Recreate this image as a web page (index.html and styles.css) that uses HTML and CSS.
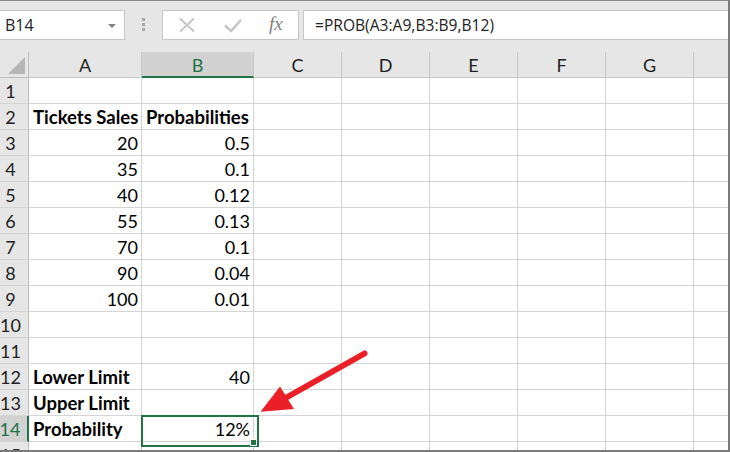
FILE: index.html
```html
<!DOCTYPE html>
<html>
<head>
<meta charset="utf-8">
<link rel="stylesheet" href="styles.css">
</head>
<body>
<div class="frame">
  <div class="fbar">
    <div class="namebox"><span class="nb-text">B14</span><span class="nb-caret"></span></div>
    <div class="grip"><i></i><i></i><i></i></div>
    <div class="fbtns">
      <svg class="ic-x" width="18" height="16" viewBox="0 0 18 16"><path d="M2 1.5 L16 14.5 M16 1.5 L2 14.5" stroke="#c6c6c6" stroke-width="2" fill="none"/></svg>
      <svg class="ic-check" width="20" height="16" viewBox="0 0 20 16"><path d="M2 7.5 L8 13 L18 2" stroke="#c6c6c6" stroke-width="2.6" fill="none"/></svg>
      <span class="fx">fx</span>
    </div>
    <div class="finput">=PROB(A3:A9,B3:B9,B12)</div>
  </div>
  <div class="sheet">
    <div class="hd corner"><span class="tri"></span></div>
    <div class="hd col">A</div>
    <div class="hd col sel">B</div>
    <div class="hd col">C</div>
    <div class="hd col">D</div>
    <div class="hd col">E</div>
    <div class="hd col">F</div>
    <div class="hd col">G</div>
    <div class="hd col last"></div>

    <div class="hd row">1</div><div class="c"></div><div class="c"></div><div class="c"></div><div class="c"></div><div class="c"></div><div class="c"></div><div class="c"></div><div class="c last"></div>
    <div class="hd row">2</div><div class="c b">Tickets Sales</div><div class="c b">Probabilities</div><div class="c"></div><div class="c"></div><div class="c"></div><div class="c"></div><div class="c"></div><div class="c last"></div>
    <div class="hd row">3</div><div class="c n">20</div><div class="c n">0.5</div><div class="c"></div><div class="c"></div><div class="c"></div><div class="c"></div><div class="c"></div><div class="c last"></div>
    <div class="hd row">4</div><div class="c n">35</div><div class="c n">0.1</div><div class="c"></div><div class="c"></div><div class="c"></div><div class="c"></div><div class="c"></div><div class="c last"></div>
    <div class="hd row">5</div><div class="c n">40</div><div class="c n">0.12</div><div class="c"></div><div class="c"></div><div class="c"></div><div class="c"></div><div class="c"></div><div class="c last"></div>
    <div class="hd row">6</div><div class="c n">55</div><div class="c n">0.13</div><div class="c"></div><div class="c"></div><div class="c"></div><div class="c"></div><div class="c"></div><div class="c last"></div>
    <div class="hd row">7</div><div class="c n">70</div><div class="c n">0.1</div><div class="c"></div><div class="c"></div><div class="c"></div><div class="c"></div><div class="c"></div><div class="c last"></div>
    <div class="hd row">8</div><div class="c n">90</div><div class="c n">0.04</div><div class="c"></div><div class="c"></div><div class="c"></div><div class="c"></div><div class="c"></div><div class="c last"></div>
    <div class="hd row">9</div><div class="c n">100</div><div class="c n">0.01</div><div class="c"></div><div class="c"></div><div class="c"></div><div class="c"></div><div class="c"></div><div class="c last"></div>
    <div class="hd row">10</div><div class="c"></div><div class="c"></div><div class="c"></div><div class="c"></div><div class="c"></div><div class="c"></div><div class="c"></div><div class="c last"></div>
    <div class="hd row">11</div><div class="c"></div><div class="c"></div><div class="c"></div><div class="c"></div><div class="c"></div><div class="c"></div><div class="c"></div><div class="c last"></div>
    <div class="hd row">12</div><div class="c b">Lower Limit</div><div class="c n">40</div><div class="c"></div><div class="c"></div><div class="c"></div><div class="c"></div><div class="c"></div><div class="c last"></div>
    <div class="hd row">13</div><div class="c b">Upper Limit</div><div class="c n"></div><div class="c"></div><div class="c"></div><div class="c"></div><div class="c"></div><div class="c"></div><div class="c last"></div>
    <div class="hd row sel">14</div><div class="c b">Probability</div><div class="c n active">12%<span class="handle"></span></div><div class="c"></div><div class="c"></div><div class="c"></div><div class="c"></div><div class="c"></div><div class="c last"></div>
    <div class="hd row">15</div><div class="c"></div><div class="c"></div><div class="c"></div><div class="c"></div><div class="c"></div><div class="c"></div><div class="c"></div><div class="c last"></div>
  </div>
  <svg class="arrow" width="730" height="452" viewBox="0 0 730 452">
    <line x1="364.5" y1="353.5" x2="282" y2="400" stroke="#ea1f27" stroke-width="6" stroke-linecap="round"/>
    <polygon points="260.5,411.8 280,386.5 294,409" fill="#ea1f27"/>
  </svg>
</div>
</body>
</html>
```
FILE: styles.css
```css
* { box-sizing: border-box; }
html, body { margin: 0; padding: 0; }
body { width: 730px; height: 452px; overflow: hidden; background: #fff; }

.frame {
  position: relative;
  width: 730px;
  height: 452px;
  background: #e6e6e6;
  border-top: 1px solid #8a8a8a;
  border-right: 2px solid #7a7a7a;
  border-bottom: 2px solid #7a7a7a;
  overflow: hidden;
}

.fbar {
  height: 51px;
  padding-top: 9px;
  display: flex;
  align-items: flex-start;
}

.namebox {
  width: 125px;
  height: 30px;
  background: #fff;
  border: 1px solid #c6c6c6;
  border-left: none;
  display: flex;
  align-items: center;
  justify-content: space-between;
  padding: 0 8px 0 5px;
  font-family: "Open Sans", "Liberation Sans", sans-serif;
  font-size: 16px;
  color: #222;
}
.nb-caret {
  width: 0; height: 0;
  border-left: 4px solid transparent;
  border-right: 4px solid transparent;
  border-top: 4px solid #808080;
  margin-top: 1px;
}

.grip {
  width: 37px;
  height: 30px;
  display: flex;
  flex-direction: column;
  align-items: center;
  padding-top: 8px;
  gap: 2px;
}
.grip i {
  display: block;
  width: 3px;
  height: 3px;
  background: #a8a8a8;
}

.fbtns {
  width: 137px;
  height: 30px;
  background: #fff;
  border: 1px solid #c6c6c6;
  display: flex;
  align-items: center;
  padding-left: 15px;
}
.ic-x { margin-right: 27px; }
.ic-check { margin-right: 26px; margin-top: 1px; }
.fx {
  font-family: "Liberation Serif", serif;
  font-style: italic;
  font-size: 19px;
  color: #7f7f7f;
  margin-top: -2px;
}

.finput {
  flex: 1;
  margin-left: 4px;
  height: 30px;
  background: #fff;
  border: 1px solid #c6c6c6;
  border-right: none;
  padding-left: 11px;
  display: flex;
  align-items: center;
  font-family: "Open Sans", "Liberation Sans", sans-serif;
  font-size: 15.6px;
  color: #222;
}

.sheet {
  display: grid;
  grid-template-columns: 29px 113px 112px 88px 88px 88px 88px 88px 34px;
  grid-auto-rows: 26px;
  height: 398px;
  overflow: hidden;
  background: #fff;
  font-family: Lato, "Liberation Sans", sans-serif;
  color: #000;
}

.hd {
  background: #e6e6e6;
  color: #222;
  font-size: 18px;
  display: flex;
  align-items: center;
  justify-content: center;
  border-right: 1px solid #c8c8c8;
  border-bottom: 1px solid #c8c8c8;
}
.hd.col { padding-top: 1px; }
.hd.col.last { border-right: none; }
.hd.row {
  padding-right: 7px;
  padding-top: 1px;
  border-bottom-color: #d4d4d4;
  border-right-color: #bdbdbd;
}
.hd.corner { position: relative; border-right-color: #bdbdbd; border-bottom-color: #bdbdbd; }
.tri {
  position: absolute;
  right: 3px;
  bottom: 3px;
  width: 0; height: 0;
  border-left: 17px solid transparent;
  border-bottom: 17px solid #b6b6b6;
}
.hd.sel { background: #d2d2d2; color: #217346; }
.hd.col.sel { border-bottom: 2px solid #217346; }
.hd.row.sel { border-right: 2px solid #217346; }

.c {
  border-right: 1px solid #d4d4d4;
  border-bottom: 1px solid #d4d4d4;
  font-size: 18px;
  display: flex;
  align-items: center;
  padding: 1px 3px 0 4px;
  white-space: nowrap;
}
.c.last { border-right: none; }
.c.b { font-weight: bold; font-size: 18.5px; }
.c.n { justify-content: flex-end; }

.c.active { position: relative; }
.c.active::after {
  content: "";
  position: absolute;
  left: -1px;
  top: -1px;
  width: 114px;
  height: 28px;
  border: 2px solid #217346;
}
.handle {
  position: absolute;
  left: 108px;
  top: 23px;
  width: 7px;
  height: 7px;
  background: #217346;
  border: 1px solid #fff;
  z-index: 2;
}

.arrow {
  position: absolute;
  left: 0;
  top: -1px;
  pointer-events: none;
}
```
